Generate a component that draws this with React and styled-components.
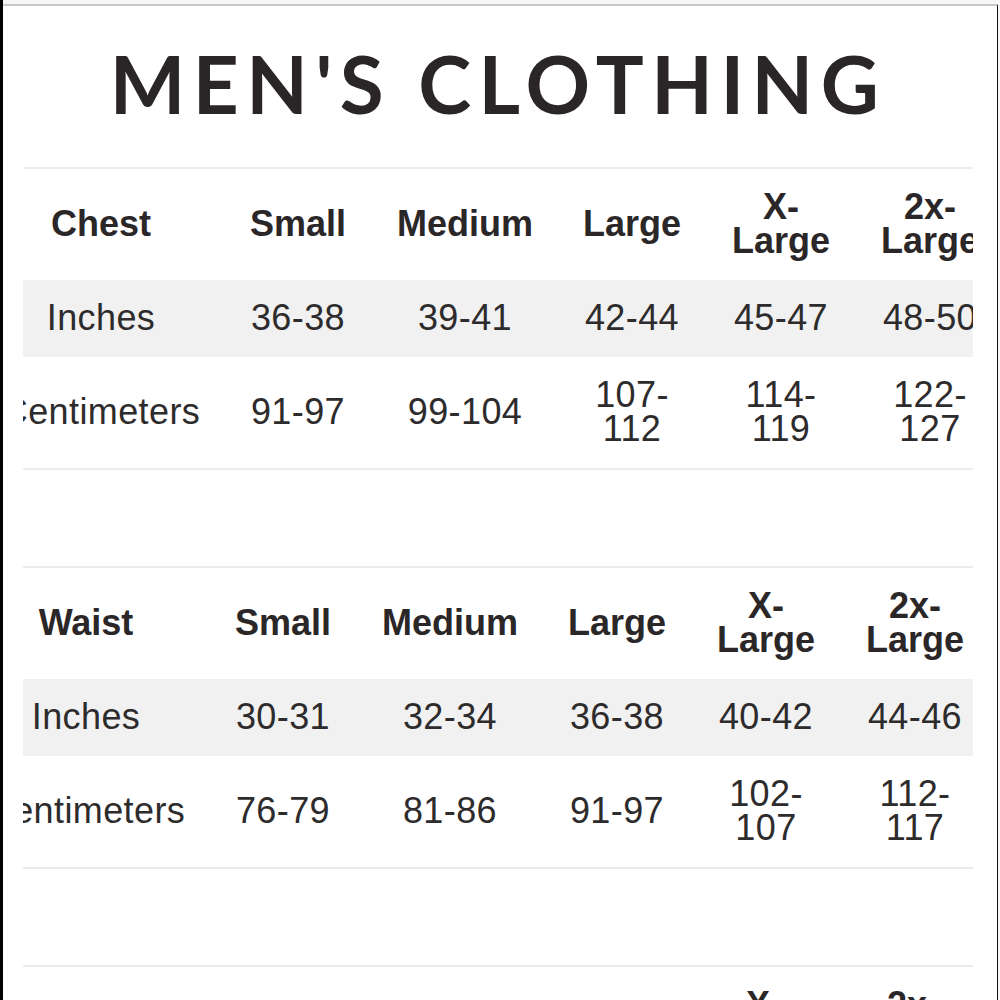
import React from 'react';
import styled, { createGlobalStyle } from 'styled-components';

const Global = createGlobalStyle`
  html, body { margin: 0; padding: 0; background: #fff; overflow: hidden; }
  body { font-family: "Liberation Sans", Arial, sans-serif; }
`;

const Screen = styled.div`
  width: 1000px;
  height: 1000px;
  box-sizing: border-box;
  border-left: 3px solid #000;
  background: #f7f7f7;
  padding-top: 4px;
  overflow: hidden;
  display: flex;
  flex-direction: column;
`;

const Frame = styled.div`
  flex: 1;
  background: #fff;
  border-top: 2px solid #c8c8c8;
  border-right: 1px solid #111;
  margin-right: 2px;
  display: flex;
  flex-direction: column;
  align-items: flex-start;
  padding: 37px 0 0 20px;
`;

const Title = styled.h1`
  width: 950px;
  margin: 0 0 44px;
  text-align: center;
  font-family: Lato, "Noto Sans", sans-serif;
  font-weight: 700;
  font-size: 80px;
  line-height: 80px;
  letter-spacing: 7.5px;
  color: #2a2526;
`;

const TableBox = styled.div`
  width: 950px;
  flex-shrink: 0;
  overflow: hidden;
  border-top: 2px solid #ececec;
  border-bottom: 2px solid #ececec;
  margin-bottom: 96px;
`;

const TableInner = styled.div`
  width: 1026px;
  margin-left: ${p => p.$shift}px;
  display: flex;
  flex-direction: column;
`;

const Row = styled.div`
  display: grid;
  grid-template-columns: 240px 154px 180px 154px 144px 154px;
  align-items: center;
  padding: 21px 0 22px;
  background: ${p => (p.$shaded ? '#f1f1f1' : 'transparent')};
`;

const Cell = styled.div`
  text-align: center;
  white-space: pre-line;
  font-size: 36px;
  line-height: 34px;
  font-weight: ${p => (p.$head ? 700 : 400)};
  letter-spacing: ${p => (p.$head ? '0px' : '0.4px')};
  color: ${p => (p.$head ? '#2b2728' : '#2e2b2c')};
`;

const tables = [
  {
    shift: -42,
    rows: [
      ['Chest', 'Small', 'Medium', 'Large', 'X-\nLarge', '2x-\nLarge'],
      ['Inches', '36-38', '39-41', '42-44', '45-47', '48-50'],
      ['Centimeters', '91-97', '99-104', '107-\n112', '114-\n119', '122-\n127'],
    ],
  },
  {
    shift: -57,
    rows: [
      ['Waist', 'Small', 'Medium', 'Large', 'X-\nLarge', '2x-\nLarge'],
      ['Inches', '30-31', '32-34', '36-38', '40-42', '44-46'],
      ['Centimeters', '76-79', '81-86', '91-97', '102-\n107', '112-\n117'],
    ],
  },
  {
    shift: -59,
    rows: [
      ['Hips', 'Small', 'Medium', 'Large', 'X-\nLarge', '2x-\nLarge'],
      ['Inches', '35-37', '38-40', '41-43', '44-46', '47-49'],
      ['Centimeters', '89-94', '97-102', '104-\n109', '112-\n117', '119-\n124'],
    ],
  },
];

function SizeTable({ shift, rows }) {
  return (
    <TableBox>
      <TableInner $shift={shift}>
        {rows.map((r, i) => (
          <Row key={i} $shaded={i === 1}>
            {r.map((c, j) => (
              <Cell key={j} $head={i === 0}>{c}</Cell>
            ))}
          </Row>
        ))}
      </TableInner>
    </TableBox>
  );
}

export default function App() {
  return (
    <>
      <Global />
      <Screen>
        <Frame>
          <Title>MEN'S CLOTHING</Title>
          {tables.map((t, i) => (
            <SizeTable key={i} shift={t.shift} rows={t.rows} />
          ))}
        </Frame>
      </Screen>
    </>
  );
}
